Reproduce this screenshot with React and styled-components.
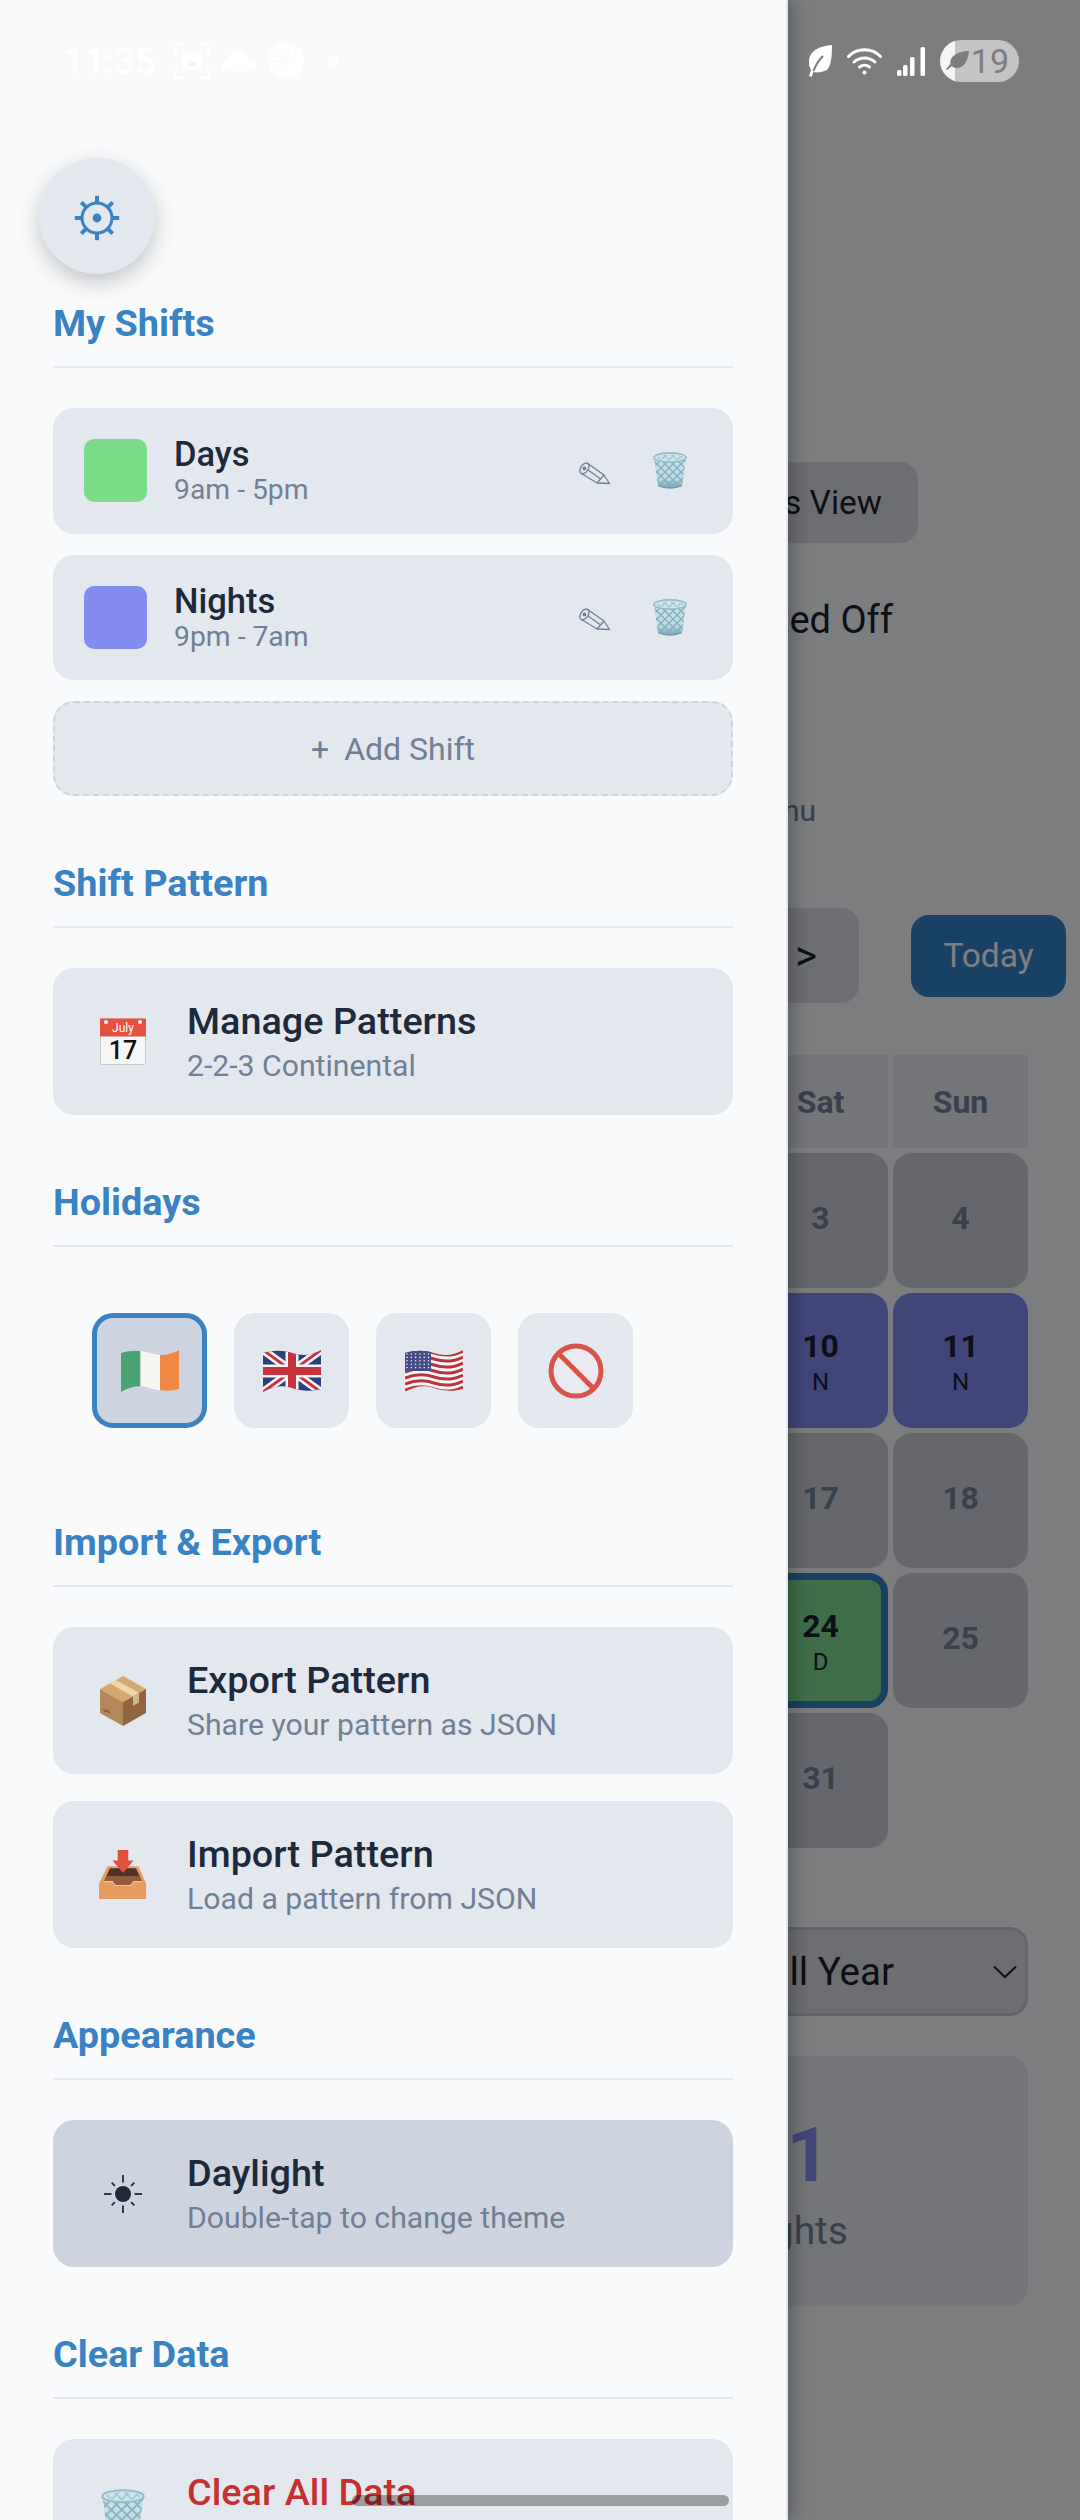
import React, { useId } from "react";
import styled, { createGlobalStyle } from "styled-components";

const Global = createGlobalStyle`
  html, body { margin: 0; padding: 0; background: #7c7d7f; }
  * { box-sizing: border-box; }
`;

const Screen = styled.div`
  position: relative;
  width: 1080px;
  height: 2520px;
  overflow: hidden;
  font-family: Roboto, "Noto Sans", sans-serif;
`;

/* ---------- page behind the drawer ---------- */
const Page = styled.main`
  height: 100%;
  background: #f8fafc;
  padding: 462px 52px 0 0;
  display: flex;
  flex-direction: column;
  align-items: flex-end;
`;
const ViewButton = styled.div`
  width: 300px;
  height: 81px;
  margin-right: 110px;
  padding-right: 36px;
  border-radius: 18px;
  background: #dadde3;
  color: #1a202c;
  font-size: 33.5px;
  display: flex;
  align-items: center;
  justify-content: flex-end;
`;
const RatedLine = styled.div`
  margin-top: 55px;
  margin-right: 135px;
  font-size: 38px;
  line-height: 44px;
  color: #1a202c;
`;
const MenuLine = styled.div`
  margin-top: 151px;
  margin-right: 212px;
  font-size: 30px;
  line-height: 36px;
  color: #718096;
`;
const NavRow = styled.div`
  margin-top: 79px;
  margin-right: -38px;
  display: flex;
  align-items: center;
  gap: 52px;
`;
const ArrowButton = styled.div`
  width: 200px;
  height: 95px;
  padding-right: 42px;
  border-radius: 18px;
  background: #dadde3;
  color: #1a202c;
  font-size: 42px;
  display: flex;
  align-items: center;
  justify-content: flex-end;
`;
const TodayButton = styled.div`
  width: 155px;
  height: 82px;
  border-radius: 18px;
  background: #3182c8;
  color: #fff;
  font-size: 33.5px;
  display: flex;
  align-items: center;
  justify-content: center;
`;
const Calendar = styled.div`
  margin-top: 52px;
  display: grid;
  grid-template-columns: 135px 135px;
  grid-template-rows: 93px repeat(5, 135px);
  gap: 5px;
`;
const DayHead = styled.div`
  background: #e6eaf0;
  color: #718096;
  font-size: 32px;
  font-weight: 700;
  display: flex;
  align-items: center;
  justify-content: center;
`;
const DayCell = styled.div`
  border-radius: 19px;
  background: ${(p) => p.$bg || "#cacfd8"};
  border: ${(p) => (p.$today ? "7px solid #3182c8" : "none")};
  color: ${(p) => (p.$bg ? "#1a202c" : "#718096")};
  padding: ${(p) => (p.$bg ? "4px 0 0" : "0 0 6px")};
  display: flex;
  flex-direction: column;
  align-items: center;
  justify-content: center;
`;
const DayNum = styled.span`
  font-size: 32px;
  line-height: 38px;
  font-weight: 700;
`;
const DayTag = styled.span`
  font-size: 24px;
  line-height: 34px;
`;
const YearSelect = styled.div`
  margin-top: 79px;
  width: 300px;
  height: 89px;
  padding-right: 8px;
  border: 3px solid #c3c8d2;
  border-radius: 18px;
  background: #dadde3;
  color: #1a202c;
  font-size: 38.5px;
  display: flex;
  align-items: center;
  justify-content: flex-end;
  gap: 99px;
`;
const StatCard = styled.div`
  margin-top: 40px;
  width: 300px;
  height: 250px;
  border-radius: 20px;
  background: #e6eaf0;
  display: flex;
  flex-direction: column;
  align-items: flex-end;
`;
const StatValue = styled.div`
  margin-top: 54px;
  margin-right: 198px;
  font-size: 76px;
  line-height: 90px;
  font-weight: 700;
  color: #818cf0;
`;
const StatLabel = styled.div`
  margin-top: 8px;
  margin-right: 180px;
  font-size: 39px;
  line-height: 46px;
  color: #718096;
`;
const Backdrop = styled.div`
  position: absolute;
  inset: 0;
  background: rgba(0, 0, 0, 0.5);
`;

/* ---------- drawer ---------- */
const Drawer = styled.aside`
  position: absolute;
  left: 0;
  top: 0;
  width: 788px;
  height: 2520px;
  overflow: hidden;
  padding: 303px 53px 0;
  background: #f8fafc;
  border-right: 2px solid #e3e7ee;
  box-shadow: 4px 0 18px rgba(0, 0, 0, 0.28);
`;
const SettingsButton = styled.div`
  position: absolute;
  left: 39px;
  top: 158px;
  width: 116px;
  height: 116px;
  border-radius: 50%;
  background: #e3e7ee;
  box-shadow: 0 8px 22px rgba(0, 0, 0, 0.22);
  display: flex;
  align-items: center;
  justify-content: center;
  padding-top: 3px;
`;
const Section = styled.section`
  margin-bottom: 67px;
`;
const Heading = styled.h2`
  margin: 0 0 40px;
  height: 65px;
  padding-bottom: 23px;
  border-bottom: 2px solid #e3e7ee;
  font-size: 37.8px;
  line-height: 40px;
  font-weight: 700;
  color: #3a82c2;
`;
const Stack = styled.div`
  display: flex;
  flex-direction: column;
  gap: ${(p) => p.$gap}px;
`;
const ShiftRow = styled.div`
  height: 125.5px;
  padding: 0 46px 0 31px;
  border-radius: 21px;
  background: #e3e7ee;
  display: flex;
  align-items: center;
  gap: 27px;
`;
const Swatch = styled.div`
  width: 63px;
  height: 63px;
  border-radius: 10px;
  background: ${(p) => p.$color};
`;
const ShiftText = styled.div`
  flex: 1;
  display: flex;
  flex-direction: column;
  gap: 1px;
`;
const ShiftName = styled.div`
  font-size: 34.5px;
  line-height: 38px;
  font-weight: 500;
  color: #1e293b;
`;
const ShiftTime = styled.div`
  font-size: 28.3px;
  line-height: 32px;
  color: #718096;
`;
const RowActions = styled.div`
  display: flex;
  align-items: center;
  gap: 42px;
`;
const PencilSlot = styled.div`
  display: flex;
  padding-top: 6px;
`;
const AddShift = styled.div`
  height: 95px;
  border: 2px dashed #cdd4df;
  border-radius: 21px;
  background: #e3e7ee;
  color: #718096;
  font-size: 32px;
  display: flex;
  align-items: center;
  justify-content: center;
  gap: 15px;
`;
const ActionRow = styled.div`
  height: 147px;
  padding-left: 46px;
  border-radius: 21px;
  background: ${(p) => (p.$active ? "#cdd4df" : "#e3e7ee")};
  display: flex;
  align-items: center;
`;
const ActionIcon = styled.div`
  flex: none;
  width: 48px;
  margin-right: 40px;
  display: flex;
  justify-content: center;
`;
const ActionText = styled.div`
  display: flex;
  flex-direction: column;
  gap: 7px;
`;
const ActionTitle = styled.div`
  font-size: 37.8px;
  line-height: 42px;
  font-weight: 500;
  color: ${(p) => (p.$danger ? "#c53030" : "#1e293b")};
`;
const ActionSub = styled.div`
  font-size: 30.2px;
  line-height: 34px;
  color: #718096;
`;
const HolidayRow = styled.div`
  padding: 26px 39px 27px;
  display: flex;
  gap: 27px;
`;
const HolidayButton = styled.div`
  width: 115px;
  height: 115px;
  border-radius: 21px;
  background: ${(p) => (p.$on ? "#cdd4df" : "#e3e7ee")};
  border: ${(p) => (p.$on ? "5px solid #3a82c2" : "none")};
  display: flex;
  align-items: center;
  justify-content: center;
`;
const ScrollThumb = styled.div`
  position: absolute;
  left: 352px;
  top: 2495px;
  width: 377px;
  height: 11px;
  border-radius: 6px;
  background: rgba(0, 0, 0, 0.32);
`;

/* ---------- status bar ---------- */
const StatusBar = styled.div`
  position: absolute;
  left: 0;
  top: 0;
  width: 100%;
  height: 122px;
  padding: 0 61px 0 63px;
  display: flex;
  align-items: center;
  justify-content: space-between;
`;
const StatusGroup = styled.div`
  display: flex;
  align-items: center;
  gap: ${(p) => p.$gap}px;
`;
const Clock = styled.span`
  width: 100px;
  font-size: 36.5px;
  font-weight: 500;
  color: #fff;
`;
const StatusDot = styled.span`
  width: 11px;
  height: 11px;
  margin-left: 12px;
  border-radius: 50%;
  background: #fff;
`;
const BatteryPill = styled.div`
  width: 79px;
  height: 42px;
  padding: 0 10px 0 6px;
  border-radius: 21px;
  background: linear-gradient(90deg, #f5f5f5 15px, #c4c4c4 15px);
  color: #7c7d7f;
  font-size: 34px;
  display: flex;
  align-items: center;
  justify-content: space-between;
`;

/* ---------- drawings ---------- */
const GearIcon = () => (
  <svg width="46" height="46" viewBox="0 0 46 46" fill="none" stroke="#3a82c2">
    <circle cx="23" cy="23" r="15" strokeWidth="3" />
    <circle cx="23" cy="23" r="4.4" fill="#3a82c2" stroke="none" />
    {[0, 45, 90, 135, 180, 225, 270, 315].map((a) => (
      <line key={a} x1="23" y1="8" x2="23" y2="0.8" strokeWidth="4" transform={`rotate(${a} 23 23)`} />
    ))}
  </svg>
);
const PencilIcon = () => (
  <svg width="32" height="24" viewBox="0 0 32 24" fill="none" stroke="#718096" strokeWidth="1.3" strokeLinejoin="round">
    <path d="M8 1 L25 13 L30.5 21.5 L18 21 L2.5 11.5" />
    <ellipse cx="5.4" cy="6.4" rx="3.7" ry="6" transform="rotate(35 5.4 6.4)" />
    <circle cx="5.4" cy="6.4" r="1.3" fill="#718096" />
    <path d="M9 8 L21 16.5 M25 13 L18 21" />
  </svg>
);
const TrashIcon = ({ w = 34, h = 37 }) => {
  const id = useId().replace(/:/g, "");
  return (
    <svg width={w} height={h} viewBox="0 0 34 37">
      <defs>
        <linearGradient id={`${id}g`} x1="0" y1="0" x2="0" y2="1">
          <stop offset="0" stopColor="#cbe4ec" />
          <stop offset="0.7" stopColor="#bcdce6" />
          <stop offset="1" stopColor="#6d9bae" />
        </linearGradient>
        <pattern id={`${id}p`} width="8" height="8" patternUnits="userSpaceOnUse">
          <path d="M0 0 L8 8 M8 0 L0 8" stroke="#86adbd" strokeWidth="1.4" />
        </pattern>
      </defs>
      <path d="M1 5 L5 34 Q17 39 29 34 L33 5 Z" fill={`url(#${id}g)`} />
      <path d="M1 5 L5 34 Q17 39 29 34 L33 5 Z" fill={`url(#${id}p)`} />
      <path d="M5 33 Q17 38 29 33 L29 34 Q17 39 5 34 Z" fill="#6d9bae" />
      <ellipse cx="17" cy="5.5" rx="16" ry="4.6" fill="#d0e6ed" stroke="#94bccb" strokeWidth="1.6" />
      <ellipse cx="17" cy="5.5" rx="13" ry="3" fill={`url(#${id}p)`} opacity="0.6" />
    </svg>
  );
};
const CalendarIcon = () => (
  <svg width="46" height="47" viewBox="0 0 46 47">
    <rect x="0.5" y="1" width="45" height="45.5" rx="1.5" fill="#f6f6f6" stroke="#c8c8c8" />
    <rect x="0" y="0.5" width="46" height="18" fill="#e5503f" />
    <circle cx="6" cy="4" r="2" fill="#fff" />
    <circle cx="40" cy="4" r="2" fill="#fff" />
    <text x="23" y="14" textAnchor="middle" fontFamily="Roboto, sans-serif" fontSize="12" fill="#fff">July</text>
    <text x="23" y="40.5" textAnchor="middle" fontFamily="Roboto, sans-serif" fontSize="25" fontWeight="500" fill="#111">17</text>
  </svg>
);
const waveClip = "M0 3 C10 0 20 0 29 3 S48 6 58 0 L58 39 C48 42 38 41 29 38 S10 36 0 42 Z";
const FlagFrame = ({ children }) => {
  const id = useId().replace(/:/g, "");
  return (
    <svg width="58" height="42" viewBox="0 0 58 42">
      <defs>
        <clipPath id={id}>
          <path d={waveClip} />
        </clipPath>
      </defs>
      <g clipPath={`url(#${id})`}>{children}</g>
    </svg>
  );
};
const IrelandFlag = () => (
  <FlagFrame>
    <rect x="0" y="0" width="19.5" height="42" fill="#4ba373" />
    <rect x="19.5" y="0" width="19.5" height="42" fill="#f5f5f2" />
    <rect x="39" y="0" width="19" height="42" fill="#ef8a45" />
  </FlagFrame>
);
const UkFlag = () => (
  <FlagFrame>
    <rect width="58" height="42" fill="#2a3f7d" />
    <path d="M0 0 L58 42 M58 0 L0 42" stroke="#f5f5f5" strokeWidth="8" />
    <path d="M0 0 L58 42 M58 0 L0 42" stroke="#c8323c" strokeWidth="3" />
    <path d="M29 0 V42 M0 21 H58" stroke="#f5f5f5" strokeWidth="13" />
    <path d="M29 0 V42 M0 21 H58" stroke="#c8323c" strokeWidth="8" />
  </FlagFrame>
);
const UsFlag = () => {
  const stripes = Array.from({ length: 13 }, (_, i) => i);
  return (
    <FlagFrame>
      <rect width="58" height="42" fill="#f5f5f5" />
      {stripes.filter((i) => i % 2 === 0).map((i) => {
        const y = 3 + i * 3;
        return (
          <path key={i} d={`M0 ${y + 1} C10 ${y - 3} 20 ${y - 3} 29 ${y} S48 ${y + 3} 58 ${y - 2}`} fill="none" stroke="#b8353f" strokeWidth="3" />
        );
      })}
      <rect x="0" y="0" width="26" height="21" fill="#464d86" />
      {Array.from({ length: 30 }, (_, i) => (
        <circle key={i} cx={2 + (i % 6) * 4.3} cy={4 + Math.floor(i / 6) * 3.4} r="0.8" fill="#e8e8ee" />
      ))}
    </FlagFrame>
  );
};
const NoIcon = () => (
  <svg width="56" height="56" viewBox="0 0 56 56" fill="none" stroke="#d9534a" strokeWidth="5">
    <circle cx="28" cy="28" r="25" fill="#e9ebf0" />
    <line x1="11" y1="11" x2="45" y2="45" />
  </svg>
);
const PackageIcon = () => (
  <svg width="46" height="50" viewBox="0 0 46 50">
    <path d="M23 0 L46 13 L23 26 L0 13 Z" fill="#d6a871" />
    <path d="M0 13 L23 26 L23 50 L0 37 Z" fill="#b2885a" />
    <path d="M46 13 L23 26 L23 50 L46 37 Z" fill="#8f643e" />
    <path d="M10 7.5 L33 20.5 L39 17 L16 4 Z" fill="#f0d5a8" />
    <path d="M33 20.5 L39 17 L39 26.5 L33 30 Z" fill="#cdb596" />
    <path d="M3 33 L10 37 M4 36 L9 34" stroke="#7d5c3a" strokeWidth="1.2" />
  </svg>
);
const TrayIcon = () => (
  <svg width="50" height="51" viewBox="0 0 50 51">
    <path d="M9 17 H41 L49 35 V51 H0 V35 Z" fill="#e89b5f" />
    <path d="M11.5 19 H38.5 L45 33 H5 Z" fill="#4d3228" />
    <path d="M8 27 H42 L45 33 H36 Q34 37 32 37 H18 Q16 37 14 33 H5 Z" fill="#935a3b" />
    <path d="M5 33 H14 Q16 37 18 37 H32 Q34 37 36 33 H45" fill="none" stroke="#f3c48e" strokeWidth="1.2" />
    <path d="M19.5 0 H30.5 V11 H36 L25 24 L14 11 H19.5 Z" fill="#e4503e" />
  </svg>
);
const SunIcon = () => (
  <svg width="38" height="38" viewBox="0 0 38 38" stroke="#1e293b" strokeWidth="1.8">
    <circle cx="19" cy="19" r="8" fill="#1e293b" stroke="none" />
    {[0, 45, 90, 135, 180, 225, 270, 315].map((a) => (
      <line key={a} x1="19" y1={a % 90 === 0 ? 0 : 3} x2="19" y2="7.5" transform={`rotate(${a} 19 19)`} />
    ))}
  </svg>
);
const ChevronIcon = () => (
  <svg width="24" height="14" viewBox="0 0 24 14" fill="none" stroke="#1a202c" strokeWidth="2">
    <path d="M1 1.5 L12 12 L23 1.5" />
  </svg>
);
const FocusIcon = () => (
  <svg width="36" height="36" viewBox="0 0 36 36" fill="none" stroke="#fff" strokeWidth="3">
    <path d="M10 1.5 H5 Q1.5 1.5 1.5 5 V10 M26 1.5 H31 Q34.5 1.5 34.5 5 V10 M10 34.5 H5 Q1.5 34.5 1.5 31 V26 M26 34.5 H31 Q34.5 34.5 34.5 31 V26" />
    <rect x="9" y="9" width="18" height="18" rx="4" fill="#fff" stroke="none" />
    <path d="M13 23 L16 19 L18 21 L20 18 L23 23 Z" fill="#eef1f5" stroke="none" />
  </svg>
);
const CloudIcon = () => (
  <svg width="36" height="20" viewBox="0 0 36 20" fill="#fff">
    <path d="M5 20 Q0 20 0 15 Q0 10 6 10 Q8 0 17 0 Q25 0 27 8 Q36 8 36 15 Q36 20 31 20 Z" />
  </svg>
);
const LimeIcon = () => (
  <svg width="36" height="36" viewBox="0 0 36 36" fill="#fff">
    <circle cx="18" cy="18" r="18" />
    <path d="M18 18 L5 10 M18 18 L12 4 M18 18 L22 4 M18 18 L30 10 M18 18 L4 18 M18 18 L8 27" stroke="#f8fafc" strokeWidth="1.4" />
  </svg>
);
const LeafIcon = () => (
  <svg width="24" height="32" viewBox="0 0 24 32">
    <path d="M24 0 C14 1 2 4 1 16 C0.5 20 2 23 3 25 L1 31 L3.5 32 L5.5 27 C9 28 15 27 19 25 C23 21 24 12 24 0 Z" fill="#fff" />
    <path d="M5.5 26 C8 19 11 15 15 11" fill="none" stroke="#7c7d7f" strokeWidth="2" />
  </svg>
);
const PillLeafIcon = () => (
  <svg width="23" height="20" viewBox="0 0 23 20" fill="#7c7d7f">
    <path d="M23 0 C23 0 22 17 11 17 C8 17 6.5 16 6 15 L1 19 L0 18 L4.5 13 C3 5 13 0 23 0 Z" />
  </svg>
);
const WifiIcon = () => (
  <svg width="35" height="27" viewBox="0 0 35 27" fill="none" stroke="#fff" strokeWidth="3" strokeLinecap="round">
    <path d="M1.5 8.5 C10 -0.5 25 -0.5 33.5 8.5" />
    <path d="M7 14 C13 8.5 22 8.5 28 14" />
    <path d="M12.5 19 C15.5 16.5 19.5 16.5 22.5 19" />
    <circle cx="17.5" cy="24.5" r="2" fill="#fff" stroke="none" />
  </svg>
);
const SignalIcon = () => (
  <svg width="28" height="29" viewBox="0 0 28 29" fill="#fff">
    <rect x="0" y="23" width="4.5" height="6" rx="1.5" />
    <rect x="6" y="18" width="4.5" height="11" rx="1.5" />
    <rect x="13" y="10" width="4.5" height="19" rx="1.5" />
    <rect x="23.5" y="0" width="4.5" height="29" rx="1.5" />
  </svg>
);

const calendarRows = [
  { sat: { n: 3 }, sun: { n: 4 } },
  { sat: { n: 10, tag: "N", bg: "#818cf0" }, sun: { n: 11, tag: "N", bg: "#818cf0" } },
  { sat: { n: 17 }, sun: { n: 18 } },
  { sat: { n: 24, tag: "D", bg: "#7bdc90", today: true }, sun: { n: 25 } },
  { sat: { n: 31 } },
];

const Day = ({ n, tag, bg, today }) => (
  <DayCell $bg={bg} $today={today}>
    <DayNum>{n}</DayNum>
    {tag && <DayTag>{tag}</DayTag>}
  </DayCell>
);

const Shift = ({ color, name, time }) => (
  <ShiftRow>
    <Swatch $color={color} />
    <ShiftText>
      <ShiftName>{name}</ShiftName>
      <ShiftTime>{time}</ShiftTime>
    </ShiftText>
    <RowActions>
      <PencilSlot>
        <PencilIcon />
      </PencilSlot>
      <TrashIcon />
    </RowActions>
  </ShiftRow>
);

const Action = ({ icon, title, sub, active, danger }) => (
  <ActionRow $active={active}>
    <ActionIcon>{icon}</ActionIcon>
    <ActionText>
      <ActionTitle $danger={danger}>{title}</ActionTitle>
      <ActionSub>{sub}</ActionSub>
    </ActionText>
  </ActionRow>
);

export default function App() {
  return (
    <Screen>
      <Global />
      <Page>
        <ViewButton>s View</ViewButton>
        <RatedLine>ted Off</RatedLine>
        <MenuLine>Menu</MenuLine>
        <NavRow>
          <ArrowButton>&gt;</ArrowButton>
          <TodayButton>Today</TodayButton>
        </NavRow>
        <Calendar>
          <DayHead>Sat</DayHead>
          <DayHead>Sun</DayHead>
          {calendarRows.map((r) => (
            <React.Fragment key={r.sat.n}>
              <Day {...r.sat} />
              {r.sun && <Day {...r.sun} />}
            </React.Fragment>
          ))}
        </Calendar>
        <YearSelect>
          Full Year
          <ChevronIcon />
        </YearSelect>
        <StatCard>
          <StatValue>91</StatValue>
          <StatLabel>Nights</StatLabel>
        </StatCard>
      </Page>
      <Backdrop />
      <Drawer>
        <SettingsButton>
          <GearIcon />
        </SettingsButton>
        <Section>
          <Heading>My Shifts</Heading>
          <Stack $gap={21}>
            <Shift color="#7bdc8a" name="Days" time="9am - 5pm" />
            <Shift color="#838df0" name="Nights" time="9pm - 7am" />
            <AddShift>
              <span>+</span>
              <span>Add Shift</span>
            </AddShift>
          </Stack>
        </Section>
        <Section>
          <Heading>Shift Pattern</Heading>
          <Action icon={<CalendarIcon />} title="Manage Patterns" sub="2-2-3 Continental" />
        </Section>
        <Section>
          <Heading>Holidays</Heading>
          <HolidayRow>
            <HolidayButton $on>
              <IrelandFlag />
            </HolidayButton>
            <HolidayButton>
              <UkFlag />
            </HolidayButton>
            <HolidayButton>
              <UsFlag />
            </HolidayButton>
            <HolidayButton>
              <NoIcon />
            </HolidayButton>
          </HolidayRow>
        </Section>
        <Section>
          <Heading>Import &amp; Export</Heading>
          <Stack $gap={27}>
            <Action icon={<PackageIcon />} title="Export Pattern" sub="Share your pattern as JSON" />
            <Action icon={<TrayIcon />} title="Import Pattern" sub="Load a pattern from JSON" />
          </Stack>
        </Section>
        <Section>
          <Heading>Appearance</Heading>
          <Action active icon={<SunIcon />} title="Daylight" sub="Double-tap to change theme" />
        </Section>
        <Section>
          <Heading>Clear Data</Heading>
          <Action danger icon={<TrashIcon w={44} h={50} />} title="Clear All Data" sub={"\u00a0"} />
        </Section>
        <ScrollThumb />
      </Drawer>
      <StatusBar>
        <StatusGroup $gap={11}>
          <Clock>11:35</Clock>
          <FocusIcon />
          <CloudIcon />
          <LimeIcon />
          <StatusDot />
        </StatusGroup>
        <StatusGroup $gap={15}>
          <LeafIcon />
          <WifiIcon />
          <SignalIcon />
          <BatteryPill>
            <PillLeafIcon />
            <span>19</span>
          </BatteryPill>
        </StatusGroup>
      </StatusBar>
    </Screen>
  );
}
